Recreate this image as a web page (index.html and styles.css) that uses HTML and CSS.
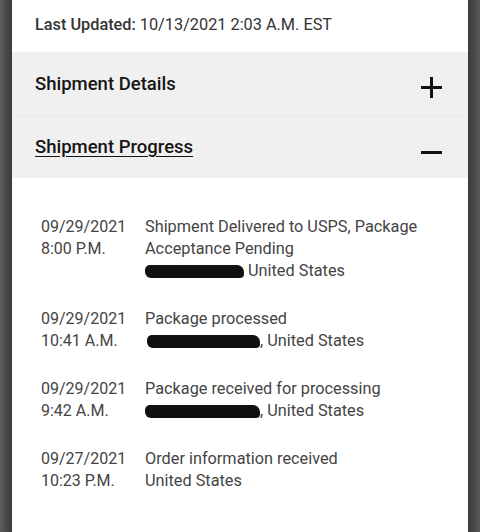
FILE: index.html
```html
<!DOCTYPE html>
<html>
<head>
<meta charset="utf-8">
<link rel="stylesheet" href="styles.css">
</head>
<body>
<div class="frame">
  <div class="edge edge-left"></div>
  <main class="card">
    <div class="updated"><span class="label">Last Updated:</span> 10/13/2021 2:03 A.M. EST</div>
    <div class="acc-row">
      <span class="acc-title">Shipment Details</span>
      <svg class="acc-icon" width="21" height="21" viewBox="0 0 21 21"><path d="M10.5 0v21M0 10.5h21" stroke="#111" stroke-width="3"/></svg>
    </div>
    <div class="acc-row acc-open">
      <span class="acc-title">Shipment Progress</span>
      <svg class="acc-icon" width="21" height="21" viewBox="0 0 21 21"><path d="M0 10.5h21" stroke="#111" stroke-width="3"/></svg>
    </div>
    <div class="events">
      <div class="event">
        <div class="when">09/29/2021<br>8:00 P.M.</div>
        <div class="what">Shipment Delivered to USPS, Package Acceptance Pending<br><span class="redact r1"></span> United States</div>
      </div>
      <div class="event">
        <div class="when">09/29/2021<br>10:41 A.M.</div>
        <div class="what">Package processed<br><span class="redact r2"></span>, United States</div>
      </div>
      <div class="event">
        <div class="when">09/29/2021<br>9:42 A.M.</div>
        <div class="what">Package received for processing<br><span class="redact r3"></span>, United States</div>
      </div>
      <div class="event">
        <div class="when">09/27/2021<br>10:23 P.M.</div>
        <div class="what">Order information received<br>United States</div>
      </div>
    </div>
  </main>
  <div class="edge edge-right"></div>
</div>
</body>
</html>
```
FILE: styles.css
```css
html, body {
  margin: 0;
  padding: 0;
  height: 100%;
}
body {
  font-family: Roboto, "Liberation Sans", sans-serif;
  background: #3b3b3b;
}
.frame {
  display: flex;
  height: 532px;
}
.edge {
  width: 12px;
  flex: none;
}
.edge-left {
  background: linear-gradient(90deg, #5e5e5e 0, #4a4a4a 6px, #3a3a3a 12px);
}
.edge-right {
  background: linear-gradient(90deg, #3a3a3a 0, #4c4c4c 7px, #5a5a5a 12px);
}
.card {
  flex: 1;
  background: #fff;
  display: flex;
  flex-direction: column;
}
.updated {
  height: 52px;
  box-sizing: border-box;
  padding: 14px 23px 0;
  font-size: 16.3px;
  line-height: 22px;
  color: #333;
}
.label {
  font-weight: 500;
}
.acc-row {
  height: 63px;
  box-sizing: border-box;
  background: #f0f0f0;
  display: flex;
  align-items: center;
  justify-content: space-between;
  padding: 0 26px 0 23px;
}
.acc-row + .acc-row {
  border-top: 1px solid #e6e6e6;
}
.acc-title {
  font-size: 18.5px;
  font-weight: 500;
  color: #151515;
}
.acc-icon {
  display: block;
  margin-top: 8px;
}
.acc-open .acc-title {
  text-decoration: underline;
  text-underline-offset: 3px;
}
.acc-open .acc-icon {
  margin-top: 10px;
}
.events {
  padding: 38px 20px 0 29px;
  display: flex;
  flex-direction: column;
  gap: 26px;
}
.event {
  display: flex;
  font-size: 16.3px;
  line-height: 22px;
  color: #444;
}
.when {
  width: 104px;
  flex: none;
  font-size: 16px;
}
.what {
  flex: 1;
}
.redact {
  display: inline-block;
  height: 13px;
  background: #111;
  border-radius: 5px 7px 4px 6px;
  vertical-align: -2px;
}
.r1 { width: 99px; }
.r2 { width: 113px; margin-left: 2px; }
.r3 { width: 115px; }
```
